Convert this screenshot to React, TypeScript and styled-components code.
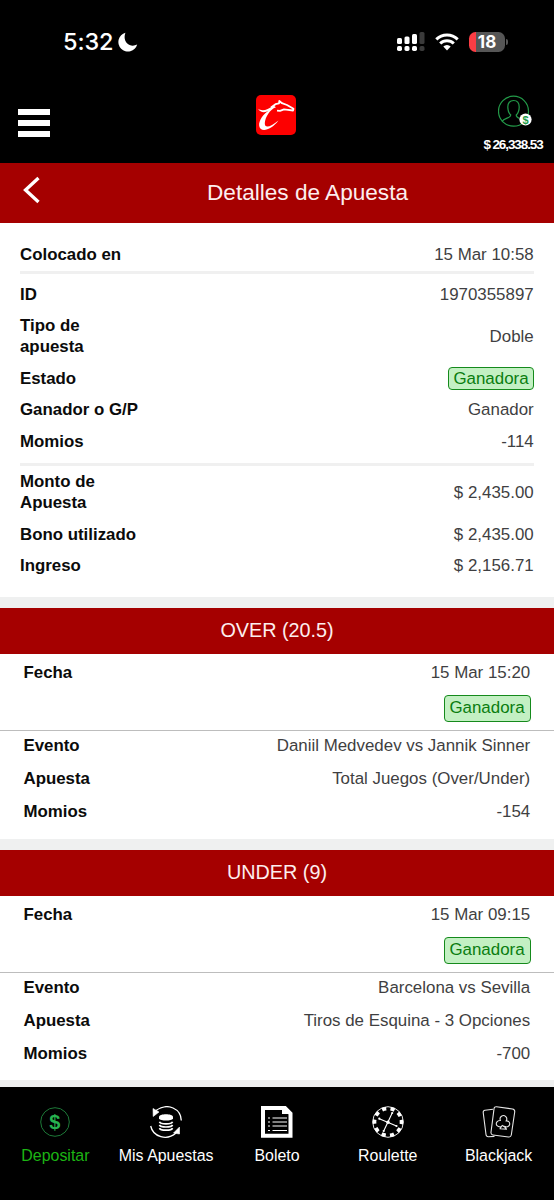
import React from 'react';
import styled, { createGlobalStyle } from 'styled-components';

const GlobalStyle = createGlobalStyle`
  * { box-sizing: border-box; }
  body {
    margin: 0;
    background: #fff;
    font-family: "Liberation Sans", Arial, sans-serif;
    font-size: 16.9px;
    line-height: 21px;
    color: #3f3f42;
  }
  svg { display: block; flex: none; }
`;

const Screen = styled.div`
  width: 554px;
  height: 1200px;
  display: flex;
  flex-direction: column;
  overflow: hidden;
`;

const StatusBar = styled.div`
  height: 83px;
  flex: none;
  padding: 0 46px 0 63px;
  background: #000;
  color: #fff;
  display: flex;
  align-items: center;
  justify-content: space-between;
`;

const Clock = styled.div`
  display: flex;
  align-items: center;
  gap: 5px;
  font: 500 23.5px/28px Inter, sans-serif;
  letter-spacing: -0.1px;
`;

const Indicators = styled.div`
  display: flex;
  align-items: center;
`;

const Battery = styled.div`
  width: 36px;
  height: 20px;
  margin-left: 10px;
  border-radius: 6.5px;
  background: linear-gradient(to right, #fb3d44 7px, #565656 7px);
  color: #fff;
  font: 700 17px/20px Inter, sans-serif;
  text-align: center;
`;

const BatteryTip = styled.div`
  width: 2px;
  height: 6px;
  margin-left: 1px;
  border-radius: 0 2px 2px 0;
  background: #565656;
`;

const AppHeader = styled.header`
  height: 80px;
  flex: none;
  padding: 12px 10px 0 18px;
  background: #000;
  display: flex;
  justify-content: space-between;
  align-items: flex-start;
`;

const MenuButton = styled.button`
  width: 62px;
  margin-top: 14px;
  padding: 0;
  border: 0;
  background: none;
  display: flex;
  flex-direction: column;
  gap: 5px;
`;

const MenuLine = styled.span`
  height: 6px;
  width: 32px;
  background: #fff;
`;

const LogoLink = styled.a`
  margin-right: 10px;
`;

const Account = styled.div`
  width: 62px;
  display: flex;
  flex-direction: column;
  align-items: center;
  gap: 9px;
  color: #fff;
  font-weight: 700;
  font-size: 13.5px;
  line-height: 16px;
  letter-spacing: -1.1px;
  white-space: nowrap;

  svg { margin-left: 3px; }
`;

const TitleBar = styled.div`
  height: 59.5px;
  flex: none;
  padding: 0 24px 0 23px;
  background: #a50000;
  color: #fdeeee;
  display: grid;
  grid-template-columns: 18px 1fr;
  align-items: center;
`;

const Title = styled.h1`
  margin: 1px 0 0;
  padding-left: 44px;
  font-size: 22.6px;
  line-height: 28px;
  font-weight: 400;
  text-align: center;
`;

const BackIcon = styled.svg`
  margin-top: -6px;
`;

const Summary = styled.section`
  height: 374.5px;
  flex: none;
  padding: 16px 20px 0;
`;

const Row = styled.div<{ $lead?: boolean }>`
  display: flex;
  justify-content: space-between;
  align-items: center;
  padding: ${(p) => (p.$lead ? '5.2px 0 6px' : '5.25px 0')};
`;

const Label = styled.div<{ $narrow?: boolean }>`
  font-weight: 700;
  font-size: 16.85px;
  color: #0b0b0b;
  width: ${(p) => (p.$narrow ? '90px' : 'auto')};
`;

const Value = styled.span`
  margin-right: 0.3px;
`;

const Rule = styled.div<{ $space: string }>`
  height: 3px;
  background: #f0f0f0;
  margin: ${(p) => p.$space};
`;

const Badge = styled.span<{ $tall?: boolean }>`
  display: block;
  width: ${(p) => (p.$tall ? 87 : 86)}px;
  height: ${(p) => (p.$tall ? 27 : 23)}px;
  margin: ${(p) => (p.$tall ? '0' : '-0.5px 0 -1.5px')};
  line-height: ${(p) => (p.$tall ? 24 : 21)}px;
  text-align: center;
  border: 1.4px solid #158a1c;
  border-radius: 4px;
  background: #c3f0c3;
  color: #0a7d10;
`;

const Gap = styled.div<{ $height: number }>`
  height: ${(p) => p.$height}px;
  flex: none;
  background: #eff0f0;
`;

const LegTitle = styled.h2`
  height: 46px;
  margin: 0;
  flex: none;
  background: #a50000;
  color: #fdeeee;
  font-size: 19.8px;
  line-height: 44px;
  font-weight: 400;
  text-align: center;
`;

const LegHead = styled.div`
  height: 77px;
  flex: none;
  padding: 8px 23.5px 0;
  border-bottom: 1px solid #bdbdbd;
  display: flex;
  justify-content: space-between;
`;

const LegStatus = styled.div`
  display: flex;
  flex-direction: column;
  align-items: flex-end;
  gap: 12.4px;
`;

const LegBody = styled.div`
  height: 107.7px;
  flex: none;
  padding: 4px 23.5px 0;
`;

const LegRow = styled.div`
  height: 33px;
  display: flex;
  justify-content: space-between;
`;

const TabBar = styled.nav`
  flex: 1;
  background: #000;
  display: grid;
  grid-template-columns: repeat(5, 1fr);
  padding-top: 19px;
`;

const Tab = styled.a<{ $active?: boolean }>`
  display: flex;
  flex-direction: column;
  align-items: center;
  gap: 8.6px;
  color: ${(p) => (p.$active ? '#1cb414' : '#fff')};
  font-size: 15.95px;
  line-height: 20px;
  white-space: nowrap;
`;

const IconText = styled.text`
  font-family: "Liberation Sans", Arial, sans-serif;
  font-weight: 700;
  letter-spacing: 0;
`;

const MoonIcon = () => (
  <svg width="20" height="20" viewBox="0 0 20 20">
    <path d="M7.4.7A9.6 9.6 0 1 0 19.2 12.6C12 16.500 4 10 7.4.7Z" fill="#fff" />
  </svg>
);

const SignalIcon = () => (
  <svg width="28" height="20" viewBox="0 0 28 20">
    {[6, 4.5, 2, 0].map((y, i) => (
      <g key={y} fill={i === 3 ? '#3a3a3a' : '#fff'}>
        <rect x={i * 7.5} y={y} width="5" height={12 - y} rx="1.5" />
        <rect x={i * 7.5} y="14" width="5" height="5" rx="1.7" />
      </g>
    ))}
  </svg>
);

const WifiIcon = () => (
  <svg width="24" height="18" viewBox="0 0 24 18">
    <g fill="none" stroke="#fff" strokeWidth="3">
      <path d="M1.3 6.4a15.2 15.2 0 0 1 21.4 0" />
      <path d="M5.2 10.5a9.6 9.6 0 0 1 13.6 0" />
    </g>
    <path d="M8.3 13.4a5.3 5.3 0 0 1 7.4 0L12 17.4Z" fill="#fff" />
  </svg>
);

const Logo = () => (
  <svg width="40" height="40" viewBox="0 0 40 40">
    <rect width="40" height="40" rx="5" fill="#fd0000" />
    <path
      d="M2 13.800C6 16.500 11 15.500 17.500 10.500L20 12.200C13.500 14.500 9.200 22.500 8.800 28 8.500 33.500 14 32.500 22.500 25.500 15 35.500 4.500 38 3.200 31 2.300 25.500 8 18.500 12.500 15.800 8.500 18.200 4 17.300 2 13.800Z"
      fill="#fff"
    />
    <path
      d="M15 12.500 19.500 9.200 23 8.300 23.300 6 26 8.200 31 10 37.500 13.800 37 15.500 32 14.800 28 14.300 24 15.800 21 15.600"
      fill="none"
      stroke="#fff"
      strokeWidth="1.800"
      strokeLinejoin="round"
    />
  </svg>
);

const AccountIcon = () => (
  <svg width="34" height="33" viewBox="0 0 34 33">
    <g fill="none" stroke="#239b49" strokeWidth="1.200">
      <circle cx="15.500" cy="16.200" r="15" />
      <path d="M4 26.500C6 23 13 23 12.800 20 10.500 18 9.800 15.500 9.800 12c0-4 2-6.500 5.700-6.500s5.700 2.500 5.700 6.500c0 3.500-.7 6-3 8 0 2 1 2.500 3.300 3.500" />
    </g>
    <circle cx="27.500" cy="24.500" r="6.100" fill="#fff" />
    <IconText x="27.500" y="28.500" textAnchor="middle" fontSize="11" fill="#1e9c48">$</IconText>
  </svg>
);

const DepositIcon = () => (
  <svg width="32" height="32" viewBox="0 0 32 32">
    <circle cx="16" cy="16" r="14.300" fill="none" stroke="#1d7938" strokeWidth="1" />
    <IconText x="15.800" y="22.700" textAnchor="middle" fontSize="20" fill="#27b34f">$</IconText>
  </svg>
);

const BetsIcon = () => (
  <svg width="32" height="32" viewBox="0 0 32 32">
    <g fill="none" stroke="#fff" strokeWidth="1.300">
      <path d="M6 4.500C18-4 31 3 31.300 14.500" />
      <path d="M.7 20C3 31 17 35 26 27" />
    </g>
    <path
      d="M9.500 15.700c1 2.800 12 2.800 13 0M9.500 18.900c1 2.800 12 2.800 13 0M9.500 22.100c1 2.800 12 2.800 13 0"
      fill="none"
      stroke="#fff"
      strokeWidth="1.700"
    />
    <path d="M9 10.800c0-3.500 14-3.500 14 0v1.700c-1 2.700-13 2.700-14 0Z" fill="#fff" />
    <path d="M3 2.500 9 6 3.200 10.500ZM29.500 21v7L23.500 27Z" fill="#fff" stroke="#fff" strokeWidth=".6" />
  </svg>
);

const TicketIcon = () => (
  <svg width="32" height="32" viewBox="0 0 32 32">
    <path d="M2 2h22l5.500 5.500V29.700H2Z" fill="none" stroke="#fff" strokeWidth="4" />
    <path d="M21 1h4v5h5v2h-9Z" fill="#fff" />
    <path d="M11.500 12H26M11.500 16H26M11.500 20H26M11.500 24.500H26" stroke="#fff" strokeWidth="1.200" />
    <path d="M7 12h2M7 16h2M7 20h2M7 24.500h2" stroke="#fff" strokeWidth="1.200" />
  </svg>
);

const RouletteIcon = () => (
  <svg width="32" height="32" viewBox="0 0 32 32">
    <circle cx="16" cy="16" r="15.300" fill="none" stroke="#fff" strokeWidth=".9" />
    <circle cx="16" cy="16" r="13.500" fill="none" stroke="#fff" strokeWidth="3.600" strokeDasharray="4.240 4.240" transform="rotate(-9 16 16)" />
    <path d="M7.300 12.700 24.500 20M20.200 7 11.700 25" stroke="#fff" strokeWidth="1.100" />
    <g fill="#fff">
      <circle cx="7.300" cy="12.700" r="1.100" />
      <circle cx="24.500" cy="20" r="1.100" />
      <circle cx="20.200" cy="7" r="1.100" />
      <circle cx="11.700" cy="25" r="1.100" />
      <circle cx="16" cy="16.300" r="1.700" />
    </g>
  </svg>
);

const CardsIcon = () => (
  <svg width="34" height="32" viewBox="0 0 34 32">
    <g fill="none" stroke="#e6e6e6" strokeWidth="1.100" strokeLinejoin="round">
      <path d="M11 3.200 3 4.300Q1 4.600 1.200 6.500L4 28.500q.3 2.300 2.500 2.200l6-.3" />
      <path d="M14.500.8 30.500 3q2.500.4 2.200 3L29.300 29q-.4 2.300-2.800 2L11 29q-2.300-.3-2-2.700L12 2.900Q12.300.5 14.500.8Z" />
      <path d="M18.500 14.500a3.300 3.300 0 1 1 5.500.5 3 3 0 1 1-.8 5.500q-1.700.6-2.700-1-2.500 2.800-5.500.2c-2-3 .8-5.600 3.500-5.200ZM20.500 19l-2.500 3.800 6.500.3-3-3.500" />
    </g>
  </svg>
);

type Entry = { label: string; value: string; narrow?: boolean; badge?: boolean };

const betRows: Entry[] = [
  { label: 'ID', value: '1970355897' },
  { label: 'Tipo de apuesta', value: 'Doble', narrow: true },
  { label: 'Estado', value: 'Ganadora', badge: true },
  { label: 'Ganador o G/P', value: 'Ganador' },
  { label: 'Momios', value: '-114' },
];

const moneyRows: Entry[] = [
  { label: 'Monto de Apuesta', value: '$ 2,435.00', narrow: true },
  { label: 'Bono utilizado', value: '$ 2,435.00' },
  { label: 'Ingreso', value: '$ 2,156.71' },
];

const legs = [
  {
    title: 'OVER (20.5)',
    date: '15 Mar 15:20',
    rows: [
      ['Evento', 'Daniil Medvedev vs Jannik Sinner'],
      ['Apuesta', 'Total Juegos (Over/Under)'],
      ['Momios', '-154'],
    ],
    gap: 11,
  },
  {
    title: 'UNDER (9)',
    date: '15 Mar 09:15',
    rows: [
      ['Evento', 'Barcelona vs Sevilla'],
      ['Apuesta', 'Tiros de Esquina - 3 Opciones'],
      ['Momios', '-700'],
    ],
    gap: 6.5,
  },
];

const tabs = [
  { label: 'Depositar', icon: <DepositIcon />, active: true },
  { label: 'Mis Apuestas', icon: <BetsIcon /> },
  { label: 'Boleto', icon: <TicketIcon /> },
  { label: 'Roulette', icon: <RouletteIcon /> },
  { label: 'Blackjack', icon: <CardsIcon /> },
];

const Entries = ({ items }: { items: Entry[] }) => (
  <>
    {items.map((r) => (
      <Row key={r.label}>
        <Label $narrow={r.narrow}>{r.label}</Label>
        {r.badge ? <Badge>{r.value}</Badge> : <Value>{r.value}</Value>}
      </Row>
    ))}
  </>
);

export default function App() {
  return (
    <Screen>
      <GlobalStyle />
      <StatusBar>
        <Clock>
          5:32
          <MoonIcon />
        </Clock>
        <Indicators>
          <SignalIcon />
          <svg width="10" height="1" />
          <WifiIcon />
          <Battery>18</Battery>
          <BatteryTip />
        </Indicators>
      </StatusBar>
      <AppHeader>
        <MenuButton aria-label="Menú">
          <MenuLine />
          <MenuLine />
          <MenuLine />
        </MenuButton>
        <LogoLink>
          <Logo />
        </LogoLink>
        <Account>
          <AccountIcon />
          <div>$ 26,338.53</div>
        </Account>
      </AppHeader>
      <TitleBar>
        <BackIcon width="18" height="28" viewBox="0 0 18 28">
          <path d="M15.500 2 2.500 14 15.500 26" fill="none" stroke="#fff" strokeWidth="3.300" />
        </BackIcon>
        <Title>Detalles de Apuesta</Title>
      </TitleBar>
      <Summary>
        <Row $lead>
          <Label>Colocado en</Label>
          <Value>15 Mar 10:58</Value>
        </Row>
        <Rule $space="0 0 5px" />
        <Entries items={betRows} />
        <Rule $space="6px 0 0" />
        <Entries items={moneyRows} />
      </Summary>
      <Gap $height={11} />
      {legs.map((leg) => (
        <React.Fragment key={leg.title}>
          <LegTitle>{leg.title}</LegTitle>
          <LegHead>
            <Label>Fecha</Label>
            <LegStatus>
              <Value>{leg.date}</Value>
              <Badge $tall>Ganadora</Badge>
            </LegStatus>
          </LegHead>
          <LegBody>
            {leg.rows.map(([label, value]) => (
              <LegRow key={label}>
                <Label>{label}</Label>
                <Value>{value}</Value>
              </LegRow>
            ))}
          </LegBody>
          <Gap $height={leg.gap} />
        </React.Fragment>
      ))}
      <TabBar>
        {tabs.map((t) => (
          <Tab key={t.label} $active={t.active}>
            {t.icon}
            {t.label}
          </Tab>
        ))}
      </TabBar>
    </Screen>
  );
}
